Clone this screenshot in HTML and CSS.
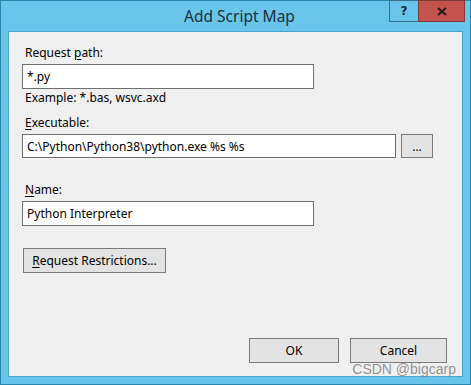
FILE: index.html
```html
<!DOCTYPE html>
<html lang="en">
<head>
    <meta charset="UTF-8">
    <meta name="viewport" content="width=device-width, initial-scale=1.0">
    <title>Add Script Map</title>
    <link rel="stylesheet" href="styles.css">
</head>
<body>
    <div class="window">
        <div class="titlebar">
            <div class="title">Add Script Map</div>
            <div class="caption-buttons">
                <button class="cap-btn help">?</button>
                <button class="cap-btn close">
                    <svg width="10" height="9" viewBox="0 0 10 9">
                        <path d="M1 1 L9 8 M9 1 L1 8" stroke="#2b1a1a" stroke-width="2.2"/>
                    </svg>
                </button>
            </div>
        </div>

        <div class="content">
            <label class="field-label">Request <u>p</u>ath:</label>
            <input type="text" class="textbox short" value="*.py">
            <div class="hint">Example: *.bas, wsvc.axd</div>

            <label class="field-label exe-label"><u>E</u>xecutable:</label>
            <div class="exe-row">
                <input type="text" class="textbox long" value="C:\Python\Python38\python.exe %s %s">
                <button class="btn browse">...</button>
            </div>

            <label class="field-label name-label"><u>N</u>ame:</label>
            <input type="text" class="textbox short" value="Python Interpreter">

            <button class="btn restrictions"><u>R</u>equest Restrictions...</button>

            <div class="spacer"></div>

            <div class="actions">
                <button class="btn ok">OK</button>
                <button class="btn cancel">Cancel</button>
            </div>
        </div>

        <div class="watermark">CSDN @bigcarp</div>
    </div>
</body>
</html>
```

FILE: styles.css
```css
html, body {
    margin: 0;
    padding: 0;
}
body {
    font-family: "Noto Sans", "Open Sans", sans-serif;
    font-size: 12px;
    color: #000;
}
.window {
    position: relative;
    width: 471px;
    height: 385px;
    box-sizing: border-box;
    background-color: #69c6ea;
    border: 1px solid #2a86ad;
    padding: 0 7px 7px 7px;
    display: flex;
    flex-direction: column;
}
.titlebar {
    height: 30px;
    position: relative;
    flex-shrink: 0;
}
.title {
    text-align: center;
    font-size: 15.5px;
    line-height: 30px;
    color: #1b2f3c;
    margin-left: 8px;
}
.caption-buttons {
    position: absolute;
    top: -1px;
    right: -2px;
    display: flex;
}
.cap-btn {
    height: 22px;
    margin: 0;
    padding: 0;
    border: 1px solid #3b6f86;
    font-family: "DejaVu Sans", sans-serif;
    font-weight: bold;
    font-size: 12px;
    color: #1a2a33;
    cursor: pointer;
    display: flex;
    align-items: center;
    justify-content: center;
}
.help {
    width: 29px;
    background-color: #69c6ea;
    border-right: none;
}
.close {
    width: 47px;
    background-color: #c4534d;
    border-color: #7d3a36;
}
.content {
    flex: 1;
    background-color: #f0f0f0;
    border: 1px solid #4aa5cc;
    padding: 13px 15px 13px 13px;
    display: flex;
    flex-direction: column;
    align-items: flex-start;
}
.field-label {
    line-height: 16px;
    margin-left: 3px;
}
.field-label u, .btn u {
    text-decoration-thickness: 1px;
    text-underline-offset: 2px;
}
.textbox {
    font-family: inherit;
    font-size: 12px;
    height: 25px;
    box-sizing: border-box;
    margin: 3px 0 0 0;
    padding: 0 4px;
    border: 1px solid #6f6f6f;
    background-color: #fff;
    color: #000;
    outline: none;
}
.short {
    width: 292px;
}
.long {
    width: 374px;
    height: 24px;
}
.hint {
    line-height: 16px;
    margin: 1px 0 0 3px;
}
.exe-label {
    margin-top: 9px;
}
.exe-row {
    display: flex;
    align-items: flex-start;
    gap: 5px;
}
.name-label {
    margin-top: 24px;
}
.btn {
    font-family: inherit;
    font-size: 12px;
    color: #000;
    background-color: #e3e3e3;
    border: 1px solid #7a7a7a;
    box-sizing: border-box;
    height: 25px;
    margin: 0;
    padding: 0;
    cursor: pointer;
}
.browse {
    width: 32px;
    margin-top: 3px;
    height: 24px;
}
.restrictions {
    width: 143px;
    margin: 22px 0 0 1px;
}
.spacer {
    flex: 1;
}
.actions {
    align-self: flex-end;
    display: flex;
    gap: 11px;
}
.ok {
    width: 90px;
}
.cancel {
    width: 97px;
}
.watermark {
    position: absolute;
    right: 14px;
    bottom: 7px;
    font-family: "Liberation Sans", sans-serif;
    font-size: 14px;
    color: rgba(120, 120, 120, 0.8);
}
```
